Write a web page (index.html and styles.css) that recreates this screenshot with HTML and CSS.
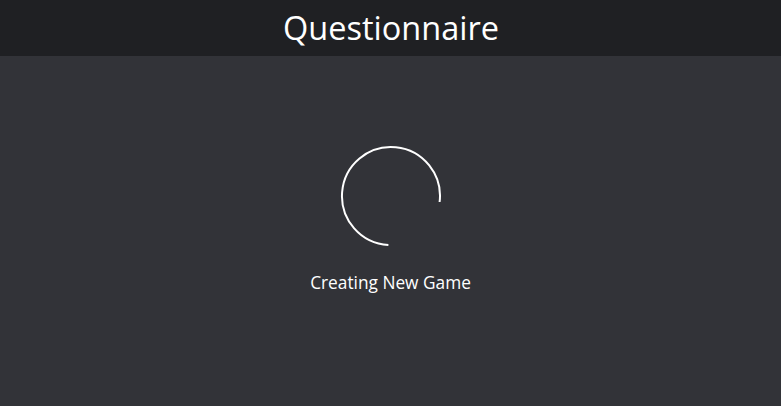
FILE: index.html
```html
<!DOCTYPE html>
<html>
<head>
<meta charset="utf-8">
<link rel="stylesheet" href="styles.css">
</head>
<body>
<header class="topbar"><h1 class="title">Questionnaire</h1></header>
<main class="content">
  <div class="loader">
    <svg class="spinner" width="102" height="102" viewBox="0 0 102 102">
      <path d="M 99.6 57 A 49 49 0 1 0 48.4 99.9" fill="none" stroke="#ffffff" stroke-width="2"/>
    </svg>
    <p class="status">Creating New Game</p>
  </div>
</main>
</body>
</html>
```
FILE: styles.css
```css
html, body { margin: 0; padding: 0; }
body {
  background: #323338;
  font-family: "Open Sans", "Noto Sans", sans-serif;
  color: #ffffff;
  height: 406px;
  overflow: hidden;
}
.topbar {
  background: #1f2023;
  height: 56px;
  display: flex;
  align-items: center;
  justify-content: center;
}
.title {
  margin: 0;
  font-weight: 400;
  font-size: 32.5px;
  letter-spacing: 0;
  line-height: 1;
  padding-left: 1px;
}
.content {
  display: flex;
  justify-content: center;
  padding-top: 89px;
}
.loader {
  display: flex;
  flex-direction: column;
  align-items: center;
}
.spinner { display: block; margin-left: 1px; }
.status {
  margin: 26px 0 0;
  font-size: 17.3px;
  letter-spacing: 0;
  line-height: 20px;
}
```
